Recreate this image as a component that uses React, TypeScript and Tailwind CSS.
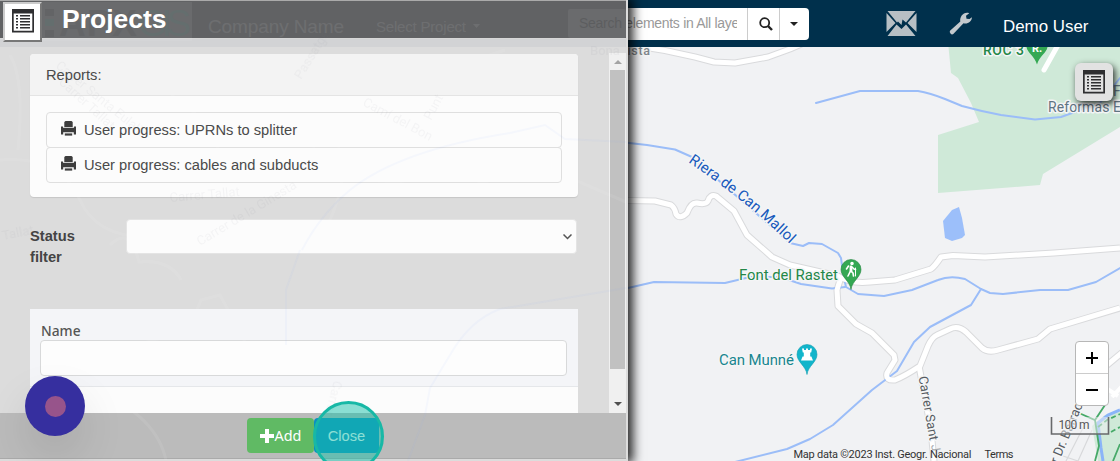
import React from "react";

function ListIcon({ className }: { className: string }) {
  return (
    <svg className={className} viewBox="0 0 22 24">
      <path fill="#2f2f31" fillRule="evenodd" d="M0 0h22v23.500H0zM1.700 4.500v17.300h18.600v-17.300z" />
      <g fill="#2f2f31">
        {[6, 9, 12, 15, 18].map((y) => (
          <g key={y}>
            <rect x="4" y={y} width="2" height="1.500" />
            <rect x="8" y={y} width="10" height="1.500" />
          </g>
        ))}
      </g>
    </svg>
  );
}

function PrintIcon() {
  return (
    <svg className="mb-[3px] h-[15px] w-[15px] shrink-0" viewBox="0 0 15 15" fill="#3d3d3d">
      <path d="M4.500 0h6l1.200 1v5h-8.400V1z" />
      <path d="M0 5.500h2v1.200h11V5.500h2v8h-2.200v-2.300H2.200v2.300H0z" />
      <path d="M3.800 12.400h7.400v2.200H3.800z" />
    </svg>
  );
}

const roads = [
  "M600 40 L665 50.500 L695 57 L714 62 L735 63 L768 57 L790 49 L806 42",
  "M600 200 L655 201 L671 205 Q675 208 676 214 Q680 220 687 213 Q691 202 697 203 Q706 205 708 201 Q710 194 716 196 L734 211 L747 235 L772 257 L790 265 L838 276 Q850 284 870 282 L895 280 L931 269 Q935 266 941 257 L953 255.500 L985 257 L1054 253 L1120 248",
  "M841 277 L837 290 L838 306 L856 324 L872 333 L894 355 L895 360 L887 373 Q885 381 895 380 Q905 376 920 366 L928 346 Q932 337 937 335 L950 329 Q958 325 966 332 L982 348 Q988 353 998 350 L1038 339 L1050 329 L1120 308",
  "M919 366 L922 382 L931 430 L934 461",
  "M1106 366 L1124 351",
];

function MapCanvas() {
  const label = "stroke-[#f4f5f6] stroke-[3px] [paint-order:stroke] [stroke-linejoin:round]";
  return (
    <svg className="block h-[414px] w-[520px]" viewBox="600 47 520 414" style={{ fontFamily: "Roboto, sans-serif" }}>
      <rect x="600" y="47" width="520" height="414" fill="#f1f2f4" />
      <path fill="#cfe9d8" d="M948.500 47 L951 73 L958 78 L971 103 L979 122 L938 135 L938 193 L1040 185 L1043 174 L1120 127 V47z" />
      <path fill="#cfe9d8" d="M1092 426 L1105 415 L1120 411 V461 H1098z" />
      <path fill="#9cbffa" d="M943 221 L952 210 L959 207 L962 218 L965 235 L962 238 L952 241 L945 238z" />
      <g fill="none" stroke="#d9dadc" strokeWidth="7" strokeLinejoin="round">
        {roads.map((d) => <path key={d} d={d} />)}
      </g>
      <g fill="none" stroke="#9bbdf8" strokeWidth="2" strokeLinejoin="round" strokeLinecap="round">
        <path d="M816 103 L860 91 L918 91 Q930 93 945 99 L962 106 Q980 111 1001 115 L1035 119.500 L1061 117 L1100 103 L1120 78" />
        <path d="M620 142 L647 145 L675 149.500 L692 157 L790 243 L803 246 L809 243 L822 244 L838 253 L841 258 L843 273 L846 287 L858 294 L884 296 L912 290 L938 280 Q950 275 965 279 L981 289 L990 293 L1003 294 L1040 290 L1068 290 L1096 282 L1120 268" />
        <path d="M628 288 L654 282 L725 283 L750 277 L780 277 L801 284 L832 288.500 L845 287" />
        <path d="M735 462 L787 449 L810 439 L833 425 L872 390 L897 371 L914 342 L930 327 L971 305 L981 289" />
      </g>
      <g fill="none" stroke="#fff" strokeWidth="5" strokeLinejoin="round">
        {roads.map((d) => <path key={d} d={d} />)}
      </g>
      <path d="M1044 70 L1058 45" stroke="#fff" strokeWidth="5" strokeLinecap="round" />
      <path d="M1106 388 L1118 396 M1124 384 L1112 397" fill="none" stroke="#fff" strokeWidth="4" />
      <path d="M1060 455 L1078 461 L1092 430 M1066 461 L1084 426" fill="none" stroke="#d8d9db" strokeWidth="1.200" />
      <path d="M1120 410 L1108 415 L1098 423 L1101 448 L1103 461" fill="none" stroke="#8ab4f8" strokeWidth="3" />
      <g fill="none" stroke="#46a968" strokeWidth="1.800">
        <path d="M1079 413 L1095 420 L1105 405" />
        <path d="M1095 420 L1099 446 L1095 461 M1120 444 L1113 461" />
        <path strokeDasharray="5 3" d="M1098 427 L1107 420 L1120 414 M1111 432 L1120 427" />
      </g>

      <defs>
        <path id="creek" d="M688 162 Q732 192 763 219 L802 255" />
      </defs>
      <text className={label} fontSize="15" fill="#185abc">
        <textPath href="#creek" textLength="131">Riera de Can Mallol</textPath>
      </text>
      <text className={label} x="600" y="55" fontSize="12.500" fontWeight="500" fill="#80868b" textLength="50">na Vista</text>
      <text className={label} x="739" y="280" fontSize="15" fill="#238748" textLength="99">Font del Rastet</text>
      <text className={label} x="719" y="365" fontSize="15" fill="#17868f" textLength="75">Can Munné</text>
      <text className={label} x="983" y="55" fontSize="14" fontWeight="500" fill="#238748" textLength="41">ROC 3</text>
      <text className={label} x="1048" y="112" fontSize="14" fill="#607482" textLength="73">Reformas E</text>
      <text x="1113" y="96" fontSize="14" fill="#607482">Fa</text>
      <text className={label} transform="translate(918.500 377) rotate(80)" fontSize="13" fill="#565c62" textLength="65">Carrer Sant</text>
      <text transform="translate(931 445) rotate(80)" fontSize="12.500" fill="#a5aaae">J</text>
      <text className={label} transform="translate(1058 464) rotate(-67)" fontSize="13" fill="#565c62">r Dr. Barrac</text>

      <path fill="#34a853" stroke="#248540" strokeWidth=".6" d="M851 289.500 C850 281 841 277 841 269.500 a10 10 0 0 1 20 0 C861 277 852 281 851 289.500z" />
      <g stroke="#fff" fill="none" strokeWidth="1.600" strokeLinecap="round" strokeLinejoin="round">
        <circle cx="852" cy="263.500" r="1" fill="#fff" />
        <path strokeWidth="2.800" d="M851 267 L851 271" />
        <path d="M850.500 271 L848 276 M851 271 L853 273 L853.500 276 M852 267 L854 269 L855.500 269.500 M848.500 266 L846.500 269" />
        <path strokeWidth="1" d="M855.500 268 V276" />
      </g>
      <path fill="#12b5cb" stroke="#129eaf" strokeWidth=".6" d="M807 374.500 C806 366 797 362 797 354.500 a10 10 0 0 1 20 0 C817 362 808 366 807 374.500z" />
      <path fill="#fff" d="M802 348.500h2v1.500h2v-1.500h2v1.500h2v-1.500h2l-.8 4h-1v4h1.200l1.600 4h-12l1.600-4h1.200v-4h-1z" />
      <path fill="#34a853" d="M1026.500 47h21c-1 6-8 9-10.500 17.500c-2.500-8.500-9.500-11.500-10.500-17.500z" />
      <text x="1032" y="52" fontSize="11" fontWeight="700" fill="#fff">R.</text>
      <g fontSize="11" fill="#333">
        <text x="793.500" y="458" textLength="178">Map data ©2023 Inst. Geogr. Nacional</text>
        <text x="984.500" y="458" textLength="29">Terms</text>
      </g>
      <rect x="1052" y="417" width="56" height="17" fill="#f1f2f4" opacity=".5" />
      <path d="M1051.500 417v17h57v-17" fill="none" stroke="#68696b" strokeWidth="1.600" />
      <text className="stroke-[#f1f2f4]/70 stroke-[2px] [paint-order:stroke]" x="1058.500" y="429" fontSize="12" fill="#565656" textLength="31">100 m</text>
    </svg>
  );
}

function GhostLayer() {
  return (
    <svg className="pointer-events-none absolute left-0 top-0 h-[461px] w-[626px]" viewBox="0 0 626 461">
      <rect x="42" y="2" width="150" height="39" fill="#fff" opacity=".06" />
      <rect x="568" y="9" width="58" height="29" rx="2" fill="#fff" opacity=".06" />
      <g style={{ fontFamily: '"Liberation Sans", sans-serif' }}>
        <g fontSize="37" opacity=".06">
          <text x="59" y="36" fontWeight="700" fill="#111" textLength="78">APX</text>
          <text x="138" y="36" fill="#10a080" textLength="53">GIS</text>
          <rect x="45" y="9" width="9" height="7" />
          <rect x="45" y="19" width="9" height="7" fill="#10a080" />
          <rect x="45" y="30" width="9" height="7" />
        </g>
        <g fill="#fff" opacity=".08">
          <text x="208" y="33" fontSize="19" textLength="136">Company Name</text>
          <text x="376" y="32" fontSize="15" textLength="90">Select Project</text>
          <path d="M473 24h7l-3.500 4z" />
        </g>
        <text x="579" y="28" fontSize="14" fill="#000" opacity=".12" textLength="43">Search</text>
      </g>
      <g fill="none" stroke="#fff" opacity=".08" strokeWidth="3">
        <path d="M0 160 Q60 155 80 200 T170 235" />
        <path d="M110 245 Q130 225 139 262 Q170 259 181 280" />
        <path d="M310 160 Q325 105 338 145 Q350 175 330 220 Q315 250 302 225" />
        <path d="M440 85 Q455 65 505 50 M360 185 L400 183 L436 195 L500 178 L575 180 L626 202" />
        <path d="M80 365 L150 341 Q190 333 201 300 L220 295 L260 370 L370 368 M80 385 Q155 410 166 460" />
        <path d="M155 65 Q170 100 190 110 T230 180 M10 55 Q25 80 18 150" />
      </g>
      <path d="M302 250 Q320 215 350 190 Q400 150 510 133 L545 125 L565 139 L626 142 M626 288 L500 309 Q470 320 450 355 L430 388 L425 415 L408 461 M300 250 L286 290 V345" fill="none" stroke="#90a8ff" opacity=".06" strokeWidth="2" />
      <g fill="#778" opacity=".055" fontSize="13" style={{ fontFamily: "Roboto, sans-serif" }}>
        <text transform="translate(55 67) rotate(39)">Carrer Santa Eulalia</text>
        <text transform="translate(58 83) rotate(42)">Carrer Tallat</text>
        <text transform="translate(301 80) rotate(-58)">Passatge</text>
        <text transform="translate(362 105) rotate(28)">Camí del Bon</text>
        <text transform="translate(431 121) rotate(-62)">Punt</text>
        <text transform="translate(170 202) rotate(-5)">Carrer Tallat</text>
        <text transform="translate(200 246) rotate(-31)">Carrer de la Ginesta</text>
        <text transform="translate(3 240) rotate(-11)">Tallat</text>
        <text transform="translate(334 380) rotate(105)">Carrer</text>
        <text x="590" y="55" fontWeight="500">Bona</text>
      </g>
    </svg>
  );
}

function TopBar() {
  return (
    <header className="flex h-[47px] items-center bg-[#00304c] pl-[568px]">
      <div className="mt-px flex h-8 w-[241px] overflow-hidden rounded bg-white">
        <div className="w-[179px] overflow-hidden whitespace-nowrap pl-[11px] text-[14px] leading-[31px] text-[#999]">
          <span className="block w-[158px] overflow-hidden tracking-[-0.3px]"><span className="invisible">Search </span>elements in All layers</span>
        </div>
        <div className="flex w-8 items-center justify-center border-l border-[#ccc]">
          <svg className="ml-[4px] h-[14px] w-[14px]" viewBox="0 0 14 14" fill="none" stroke="#222" strokeWidth="1.800"><circle cx="5.700" cy="5.700" r="4.500" /><path strokeWidth="2.400" d="M9 9l4 4" /></svg>
        </div>
        <div className="flex flex-1 items-center justify-center border-l border-[#ccc] pr-[2px]">
          <svg className="h-1 w-2" viewBox="0 0 8 4"><path fill="#222" d="M0 0h8L4 4z" /></svg>
        </div>
      </div>
      <svg className="ml-[77px] h-[25px] w-[31px]" viewBox="0 0 30 25" fill="#b7bfc4">
        <path d="M1 0h28L19.500 11.500l-3.500-3L15 14l-3.500-3.500-1 1z" />
        <path d="M0 2l9 10-9 9zM30 2l-9 10 9 9zM1 25l9-11.500L15 18l4.500-4.500L29 25z" />
      </svg>
      <svg className="ml-[32px] h-[23px] w-[23px]" viewBox="0 0 23 23" fill="#c3c9cd">
        <path d="M1 18.800L11.300 9.500C10.500 5 14 0 19 .7L20.300 1.300 17 3.800l.5 3L20.500 7l2.400-1.700C23 9.500 18.500 12.500 14.500 11.300L4.300 22Q2.800 23 1.500 21.500T1 18.800z" />
      </svg>
      <span className="ml-[31px] mt-[6px] whitespace-nowrap text-[16.900px] leading-5 text-white">Demo User</span>
    </header>
  );
}

function Report({ name }: { name: string }) {
  return (
    <div className="-mb-[1.5px] flex h-9 items-center rounded border border-[#dfdfdf] pl-[14px]">
      <PrintIcon />
      <span className="ml-[8px] whitespace-nowrap text-[14.700px] leading-5">{name}</span>
    </div>
  );
}

function ProjectsDialog() {
  return (
    <section className="absolute left-0 top-0 flex h-[461px] w-[628px] flex-col border-r-2 border-[#dcdcdc] bg-[#dcdcdc] text-[#4a4a4a] shadow-[3px_0_10px_2px_rgba(0,0,0,0.85)]">
      <div className="flex h-[39px] shrink-0 border-b border-t border-[#d7d7d7] border-t-[#aaa] bg-[#616264]">
        <div className="z-10 ml-[3px] mt-px flex h-[40px] w-[39px] shrink-0 items-center justify-center border-2 border-[#ccc] border-b-[#777] border-r-[#777] bg-white pb-[3px]">
          <ListIcon className="h-[24px] w-[22px]" />
        </div>
        <h1 className="z-10 ml-5 text-[26.500px] font-bold leading-[36px] text-white">Projects</h1>
      </div>
      <div className="h-2 shrink-0 bg-[#d2d3d5]" />
      <div className="flex h-[366px] shrink-0">
        <div className="w-[609px] overflow-hidden pl-[30px] pt-[7px]">
          <div className="h-[143px] w-[547.500px] rounded bg-[#fcfcfc] shadow-[0_1px_1px_rgba(0,0,0,0.1)]">
            <div className="h-[42px] rounded-t border-b border-[#e4e4e4] bg-[#f3f3f3] pl-4 text-[14.700px] leading-[42px]">Reports:</div>
            <div className="px-4 pt-4">
              <Report name="User progress: UPRNs to splitter" />
              <Report name="User progress: cables and subducts" />
            </div>
          </div>
          <div className="mt-[22px] flex h-[90px]">
            <div className="w-[96px] pt-[7px] text-[14.700px] font-bold leading-[21px] text-[#444]">Status<br />filter</div>
            <div className="flex h-[35px] w-[451px] items-center justify-end rounded border border-[#e4e4e4] bg-[#fcfcfc] pr-1">
              <svg className="h-[6px] w-[9px]" viewBox="0 0 9 6" fill="none" stroke="#555" strokeWidth="1.500"><path d="M.5.5l4 4 4-4" /></svg>
            </div>
          </div>
          <div className="h-[104px] w-[548px] bg-[#fcfcfc]">
            <div className="h-[78px] border-b border-[#e5e7ea] bg-[#f4f5f8] px-[10px] pt-3 text-[#555]">
              <div className="h-[19px] pl-px font-['Noto_Sans'] text-[13.800px] font-medium leading-5">Name</div>
              <div className="h-9 w-[527px] rounded border border-[#d8d9da] bg-[#fdfdfd]" />
            </div>
          </div>
        </div>
        <div className="mt-[6px] flex w-[17px] flex-col items-center bg-[#f0f0f0]">
          <div className="flex h-[17px] items-center"><svg className="h-1 w-2" viewBox="0 0 8 4"><path d="M0 4h8L4 0z" fill="#a3a3a3" /></svg></div>
          <div className="h-[299px] w-[15px] bg-[#c1c1c1]" />
          <div className="mt-[33px]"><svg className="block h-1 w-2" viewBox="0 0 8 4"><path d="M0 0h8L4 4z" fill="#505050" /></svg></div>
        </div>
      </div>
      <div className="flex h-[46px] shrink-0 border-b border-[#aaa] bg-[#bbb] pl-[247px] pt-[5px]">
        <button className="flex h-[35px] w-[67px] items-center justify-center rounded bg-[#60ba64] font-['Noto_Sans'] text-[14.400px] text-white">
          <svg className="mr-px h-[14px] w-[14px]" viewBox="0 0 14 14" fill="#fff"><path d="M5 0h4v5h5v4H9v5H5V9H0V5h5z" /></svg>Add
        </button>
        <button className="h-[35px] w-[65px] rounded bg-[#0b8fc1] pt-px text-[14.700px] text-white">Close</button>
      </div>
    </section>
  );
}

export default function App() {
  return (
    <main className="relative h-[461px] w-[1120px] overflow-hidden bg-[#f1f2f4] font-['Liberation_Sans',Arial,sans-serif]">
      <TopBar />
      <div className="flex justify-end"><MapCanvas /></div>
      <button className="absolute left-[1075px] top-[63px] flex h-[38px] w-[38px] items-center justify-center rounded-md bg-[#e2e2e2] shadow-[2px_3px_7px_rgba(0,0,0,0.8)]">
        <ListIcon className="h-[24px] w-[22px]" />
      </button>
      <div className="absolute left-[1075px] top-[341px] flex h-[65px] w-[34px] flex-col rounded border border-[#b7b7b7] bg-white">
        <div className="flex flex-1 items-center justify-center border-b border-[#ccc]"><svg className="h-3 w-3" viewBox="0 0 12 12" stroke="#000" strokeWidth="2"><path d="M0 6h12M6 0v12" /></svg></div>
        <div className="flex flex-1 items-center justify-center"><svg className="h-3 w-3" viewBox="0 0 12 12" stroke="#000" strokeWidth="2"><path d="M0 6h12" /></svg></div>
      </div>
      <ProjectsDialog />
      <GhostLayer />
      <div className="absolute left-[313px] top-[401px] h-[71px] w-[71px] rounded-full border-[3px] border-[#17b8a6] bg-[#18bfa9]/50" />
      <div className="absolute left-[25px] top-[376px] flex h-[60px] w-[60px] items-center justify-center rounded-full bg-[#362f9f] shadow-[0_22px_45px_rgba(0,0,0,0.1)]">
        <div className="h-[21px] w-[21px] rounded-full bg-[#97548b]" />
      </div>
    </main>
  );
}
